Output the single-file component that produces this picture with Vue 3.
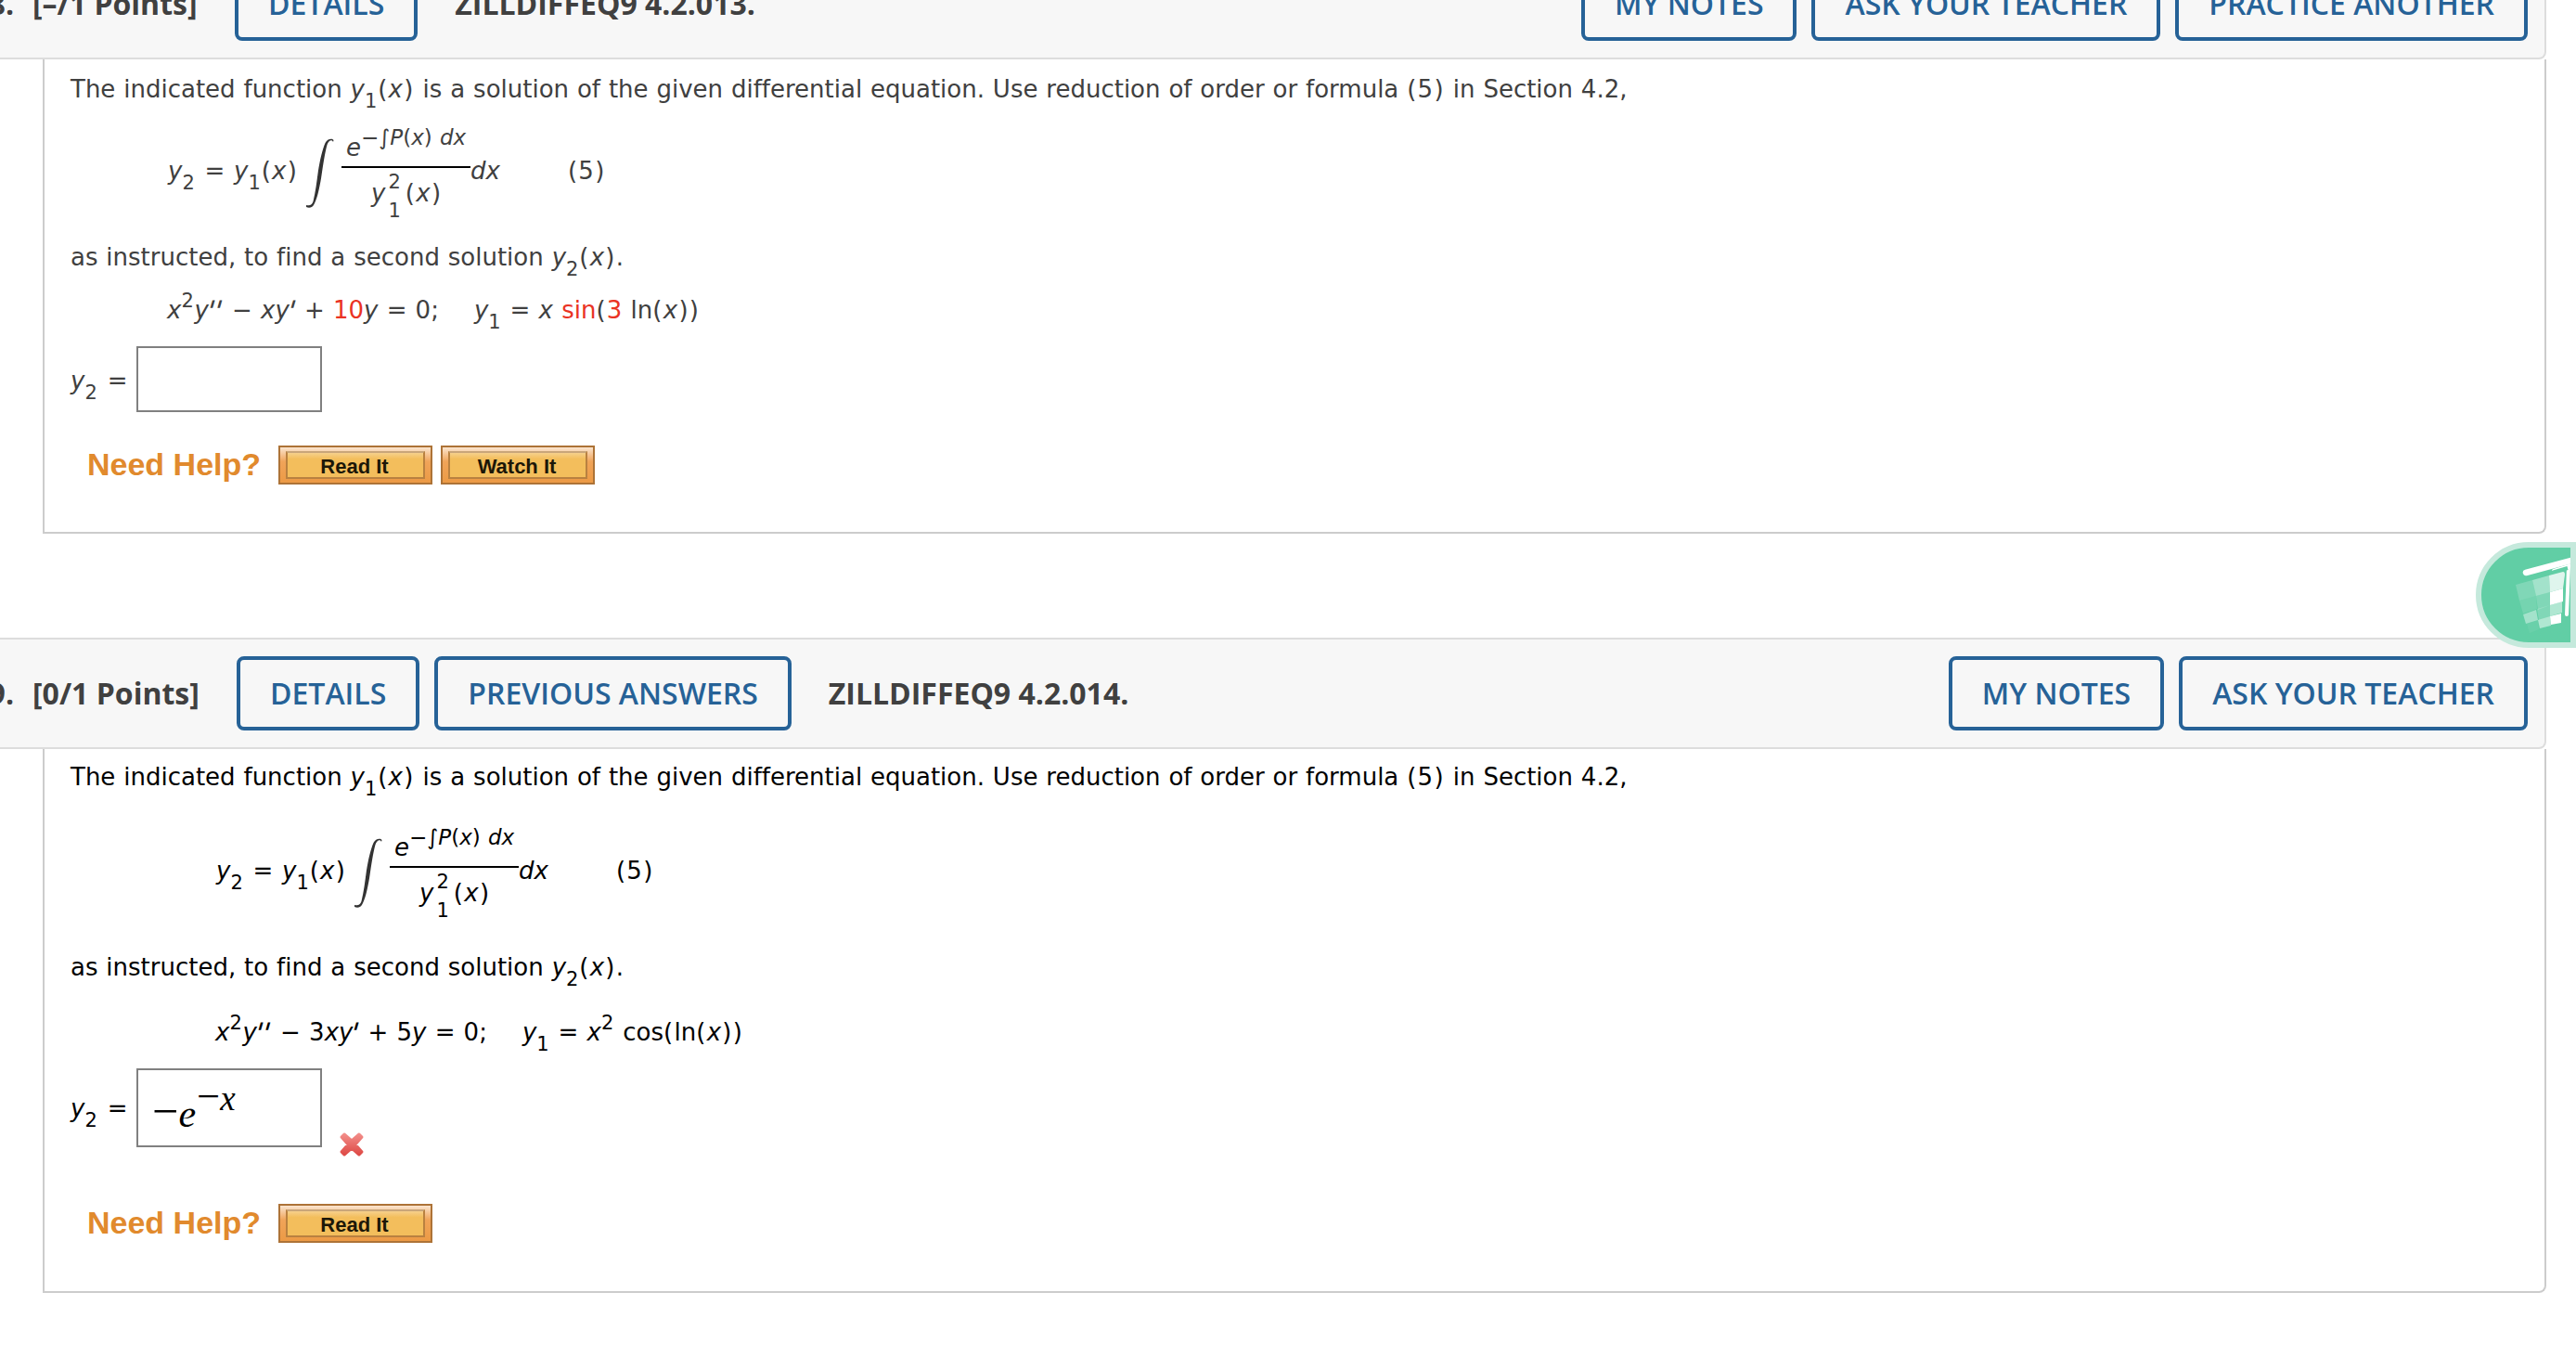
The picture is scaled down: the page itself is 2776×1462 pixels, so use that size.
<template>
  <div class="page">
    <section v-for="q in questions" :key="q.id" class="question" :class="q.theme">
      <header class="bar">
        <span class="number">{{ q.id }}.</span>
        <span class="points">{{ q.points }}</span>
        <button v-for="b in q.leftButtons" :key="b" class="btn">{{ b }}</button>
        <span class="source">{{ q.source }}</span>
        <span class="spacer" />
        <button v-for="b in q.rightButtons" :key="b" class="btn">{{ b }}</button>
      </header>

      <div class="panel">
        <p class="line intro">The indicated function <i>y</i><sub>1</sub><span class="arg">(<i>x</i>)</span> is a solution of the given differential equation. Use reduction of order or formula <span class="arg">(5)</span> in Section 4.2,</p>

        <div class="formula">
          <span class="lhs"><i>y</i><sub>2</sub> = <i>y</i><sub>1</sub><span class="arg">(<i>x</i>)</span></span>
          <svg class="integral" viewBox="0 0 30 76" width="30" height="76">
            <path d="M29 4 C28 1 24 2 22.5 7 C20 16 18.2 29 16.2 42 C14.2 54 12 64 9 70 C7 75 3 75.5 0 74 L0 72 C4 73 6 72 7.5 68 C10 58 11.3 47 12.8 36 C14.8 23 17.5 12 20.5 5 C22.5 0.5 28 -0.5 29.5 2Z" />
          </svg>
          <span class="fraction">
            <span class="top"><i>e</i><span class="exp">−∫<i>P</i>(<i>x</i>) <i>dx</i></span></span>
            <span class="bottom"><i class="base">y</i><span class="stack"><span>2</span><span>1</span></span><span class="base arg">(<i>x</i>)</span></span>
          </span>
          <span class="dx"><i>dx</i></span>
          <span class="ref arg">(5)</span>
        </div>

        <p class="line outro">as instructed, to find a second solution <i>y</i><sub>2</sub><span class="arg">(<i>x</i>)</span>.</p>

        <p v-if="q.id === 8" class="line equation">
          <i>x</i><sup>2</sup><i>y</i><i class="prime double">''</i> − <i>xy</i><i class="prime">'</i> + <em>10</em><i>y</i> = 0;<span class="gap" /><i>y</i><sub>1</sub> = <i>x</i> <em>sin</em><span class="arg">(</span><em>3</em> ln<span class="arg">(<i>x</i>))</span>
        </p>
        <p v-else class="line equation">
          <i>x</i><sup>2</sup><i>y</i><i class="prime double">''</i> − 3<i>xy</i><i class="prime">'</i> + 5<i>y</i> = 0;<span class="gap" /><i>y</i><sub>1</sub> = <i>x</i><sup>2</sup> cos<span class="arg">(</span>ln<span class="arg">(<i>x</i>))</span>
        </p>

        <div class="answer">
          <span class="label"><i>y</i><sub>2</sub> =</span>
          <span class="box">
            <span v-if="q.answered" class="math"><span class="minus">−</span><i>e</i><span class="power"><span class="minus">−</span><i>x</i></span></span>
          </span>
          <svg v-if="q.answered" class="wrong" viewBox="0 0 28 28" width="28" height="28">
            <defs>
              <linearGradient id="wrongFill" x1="0" x2="0" y1="0" y2="1">
                <stop offset="0%" stop-color="#f28c88" />
                <stop offset="100%" stop-color="#de4a46" />
              </linearGradient>
            </defs>
            <path
              d="M6 3 L14 10 L22 3 L25 6 L18 14 L25 22 L22 25 L14 18 L6 25 L3 22 L10 14 L3 6Z"
              fill="url(#wrongFill)"
              stroke="url(#wrongFill)"
              stroke-width="3"
              stroke-linejoin="round"
            />
          </svg>
        </div>

        <div class="help">
          <span class="help-title">Need Help?</span>
          <button v-for="h in q.help" :key="h" class="help-btn"><span>{{ h }}</span></button>
        </div>
      </div>
    </section>

    <div class="widget">
      <svg viewBox="0 0 96 102" width="96" height="102">
        <path d="M48 27 L100 13" stroke="#fff" stroke-width="6.5" stroke-linecap="round" />
        <path d="M78 25 L94 20 L92 72" fill="none" stroke="#fff" stroke-width="4" stroke-linecap="round" />
        <path d="M76 27 L93 22" stroke="#61cea5" stroke-width="4" />
        <path v-for="t in tiles" :key="t.d" :d="t.d" fill="#fff" :fill-opacity="t.o" />
      </svg>
    </div>
  </div>
</template>

<script setup>
const questions = [
  {
    id: 8,
    theme: 'first',
    points: '[–/1 Points]',
    leftButtons: ['DETAILS'],
    source: 'ZILLDIFFEQ9 4.2.013.',
    rightButtons: ['MY NOTES', 'ASK YOUR TEACHER', 'PRACTICE ANOTHER'],
    help: ['Read It', 'Watch It'],
    answered: false,
  },
  {
    id: 9,
    theme: 'second',
    points: '[0/1 Points]',
    leftButtons: ['DETAILS', 'PREVIOUS ANSWERS'],
    source: 'ZILLDIFFEQ9 4.2.014.',
    rightButtons: ['MY NOTES', 'ASK YOUR TEACHER'],
    help: ['Read It'],
    answered: true,
  },
]

// Tiles of the tilted grid in the side widget
const tiles = [
  { d: 'M37 40 L55 35 L59 52 L41 57Z', o: 0.2 },
  { d: 'M55 35 L73 30 L74 48 L59 52Z', o: 0.42 },
  { d: 'M73 30 L88 26 Q90 26 90 29 L88 44 L74 48Z', o: 0.8 },
  { d: 'M41 57 L59 52 L60 66 L45 71Z', o: 0.13 },
  { d: 'M59 52 L74 48 L74 62 L61 67Z', o: 0.2 },
  { d: 'M74 48 L88 44 L88 58 L74 62Z', o: 1 },
  { d: 'M45 72 L59 67 L61 78 L48 82Z', o: 0.42 },
  { d: 'M60 66 L74 62 L74 74 L62 78Z', o: 0.2 },
  { d: 'M74 62 L87 58 L87 70 L74 74Z', o: 0.5 },
  { d: 'M49 82 L61 78 L62 88 L52 92Z', o: 0.06 },
  { d: 'M61 78 L74 74 L75 84 L63 87Z', o: 0.5 },
  { d: 'M74 74 L86 71 L86 81 L75 83Z', o: 1 },
]
</script>

<style>
body {
  background: #fff;
  overflow: hidden;
}
</style>

<style scoped>
.page {
  display: flow-root;
  position: relative;
  width: 2776px;
  height: 1462px;
  overflow: hidden;
  font-family: Verdana, "DejaVu Sans", sans-serif;
  font-size: 26px;
  font-variant-ligatures: none;
  color: #404040;
}

.question {
  width: 2744px;
}

.first {
  margin-top: -56px;
}

.second {
  margin-top: 112px;
}

.bar {
  display: flex;
  align-items: center;
  box-sizing: border-box;
  height: 120px;
  padding-right: 18px;
  border: 2px solid #ddd;
  border-left: 0;
  border-radius: 0 0 8px 0;
  background: #f7f7f7;
  font: 700 32px/44px "Open Sans", sans-serif;
  white-space: nowrap;
}

.number {
  width: 35px;
  display: flex;
  justify-content: flex-end;
  padding-right: 20px;
  box-sizing: border-box;
}

.points {
  width: 178px;
  margin-right: 42px;
}

.first .points {
  width: 176px;
}

.btn {
  box-sizing: border-box;
  height: 80px;
  margin: 0 16px 0 0;
  padding: 0 32px;
  border: 4px solid #266297;
  border-radius: 8px;
  background: transparent;
  color: #266297;
  font: 600 32px/44px "Open Sans", sans-serif;
}

.btn:last-child {
  margin-right: 0;
}

.source {
  margin-left: 24px;
}

.spacer {
  flex: 1;
}

.panel {
  box-sizing: border-box;
  height: 511px;
  margin-left: 46px;
  padding: 0 28px;
  border: 2px solid #ccc;
  border-top: 0;
  border-radius: 0 0 8px 0;
  overflow: hidden;
  word-spacing: 0.9px;
}

.second .panel {
  height: 586px;
  color: #000;
}

.line {
  height: 40px;
  margin: 0;
  line-height: 40px;
  white-space: nowrap;
}

sub,
sup {
  font-size: 21px;
  line-height: 0;
  letter-spacing: 0.8px;
  vertical-align: -11px;
}

sup {
  vertical-align: 12px;
}

em {
  font-style: normal;
  color: #ea3323;
}

.arg {
  letter-spacing: 1.3px;
}

.prime {
  display: inline-block;
  width: 7px;
  font-size: 31px;
  line-height: 0;
  vertical-align: -3px;
  letter-spacing: -0.8px;
  transform: skewX(-16deg);
  transform-origin: 0 -8px;
}

.double {
  width: 16px;
}

.intro,
.outro {
  word-spacing: 0.62px;
}

.intro {
  margin-top: 12px;
}

.second .intro {
  margin-top: 10px;
}

.formula {
  display: flex;
  align-items: flex-start;
  height: 100px;
  margin-top: 24px;
  padding-left: 105px;
  line-height: 40px;
  white-space: nowrap;
}

.second .formula {
  margin-top: 37px;
  padding-left: 157px;
}

.lhs,
.dx,
.ref {
  margin-top: 24px;
}

.lhs {
  width: 149px;
  word-spacing: 1.6px;
}

.integral {
  margin-top: 9px;
  fill: #333;
}

.fraction {
  width: 139px;
  margin-left: 8px;
}

.top {
  display: block;
  height: 39px;
  border-bottom: 2px solid #000;
  padding-left: 5px;
  line-height: 38px;
}

.exp {
  font-size: 23px;
  line-height: 0;
  vertical-align: 12px;
}

.bottom {
  display: flex;
  padding-left: 32px;
}

.base {
  margin-top: 7px;
}

.stack {
  display: flex;
  flex-direction: column;
  margin: 0 5px 0 3px;
  font-size: 21px;
  line-height: 31px;
}

.ref {
  margin-left: 73px;
}

.outro {
  margin-top: 17px;
}

.second .outro {
  margin-top: 28px;
}

.equation {
  margin-top: 17px;
  padding-left: 104px;
}

.second .equation {
  margin-top: 30px;
  padding-left: 156px;
}

.gap {
  display: inline-block;
  width: 38px;
}

.answer {
  display: flex;
  align-items: flex-start;
  margin-top: 19px;
  line-height: 40px;
}

.label {
  width: 71px;
  margin-top: 17px;
  word-spacing: 2px;
}

.second .label {
  margin-top: 23px;
}

.box {
  box-sizing: border-box;
  width: 200px;
  height: 71px;
  padding: 0 15px;
  border: 2px solid #808080;
}

.second .box {
  height: 85px;
}

.math {
  display: block;
  margin-top: 27px;
  font: 42px/40px "Liberation Serif", serif;
}

.minus {
  font-size: 1.2em;
  line-height: 0;
}

.power {
  margin-left: 1px;
  font-size: 37px;
  line-height: 0;
  vertical-align: 18px;
}

.wrong {
  margin: 68px 0 0 18px;
}

.help {
  display: flex;
  align-items: center;
  height: 42px;
  margin-top: 36px;
  padding-left: 18px;
  word-spacing: 0;
}

.second .help {
  margin-top: 50px;
}

.help-title {
  width: 206px;
  color: #e18a2d;
  font: 700 34px/40px "Liberation Sans", Arial, sans-serif;
  margin-top: -2px;
}

.help-btn {
  box-sizing: border-box;
  width: 166px;
  height: 42px;
  margin: 0 9px 0 0;
  padding: 4px 6px;
  border: 2px solid #ad7337;
  background: linear-gradient(#fbe5cf, #f0a459 40%, #ec9a45);
}

.help-btn span {
  display: block;
  box-sizing: border-box;
  height: 30px;
  padding-right: 2px;
  border: 2px solid #b98140;
  border-top-color: #c9a67a;
  background: linear-gradient(#f6d08c, #f3be5c 25%);
  color: #1c1708;
  font: 700 22px/29px "Liberation Sans", Arial, sans-serif;
}

.widget {
  position: absolute;
  top: 584px;
  right: 0;
  border: 6px solid #c5e9dc;
  border-radius: 57px 0 0 57px;
  background: #61cea5;
  overflow: hidden;
}

.widget svg {
  display: block;
}
</style>
